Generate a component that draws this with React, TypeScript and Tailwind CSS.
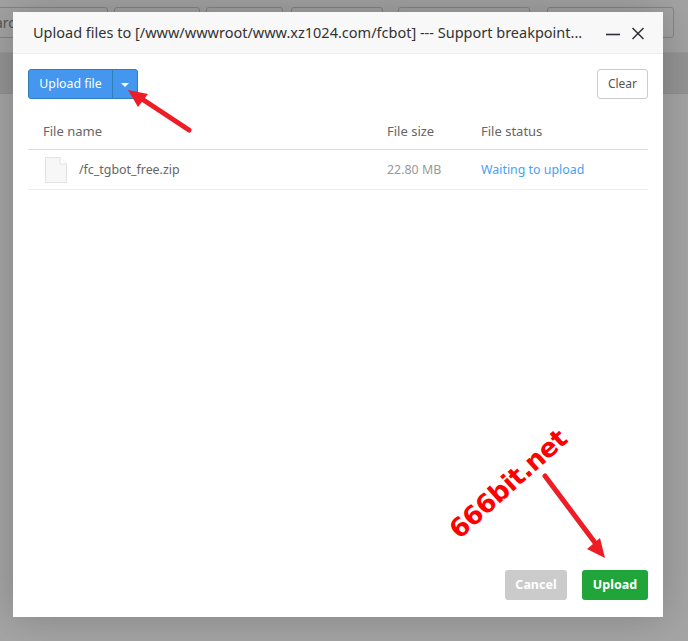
export default function App() {
  const bgBtn = "h-[31px] shrink-0 rounded-[3px] border border-[#858585]";
  return (
    <div className="relative h-[641px] w-[688px] overflow-hidden bg-[#a5a5a5] font-['Noto_Sans','Open_Sans',sans-serif]">
      {/* dimmed page behind */}
      <div className="flex h-[53px] items-start gap-[6px] border-b border-[#999] bg-[#a3a3a3] pt-[7px]">
        <div className={`${bgBtn} ml-[-10px] flex w-[118px] items-center justify-end pr-[92px] text-[14px] whitespace-nowrap text-[#555]`}>arc</div>
        <div className={`${bgBtn} w-[86px]`} />
        <div className={`${bgBtn} w-[77px]`} />
        <div className={`${bgBtn} ml-[2px] w-[92px]`} />
        <div className={`${bgBtn} ml-[9px] w-[132px]`} />
        <div className={`${bgBtn} ml-[11px] w-[127px]`} />
      </div>
      <div className="h-[41px] border-b border-[#8f8f8f] bg-[#949494]" />

      {/* modal */}
      <div className="absolute left-[13px] top-[12px] flex h-[605px] w-[650px] flex-col bg-white shadow-[0_0_40px_rgba(0,0,0,0.22)]">
        <div className="flex h-[42px] shrink-0 items-center border-b border-[#eeeeee] bg-[#f8f8f8] pl-[20px] pr-[19px]">
          <span className="w-[560px] whitespace-nowrap text-[14.5px] leading-none text-[#333]">
            Upload files to [/www/wwwroot/www.xz1024.com/fcbot] --- Support breakpoint...
          </span>
          <svg className="ml-auto" width="38" height="14" viewBox="0 0 38 14" fill="none" stroke="#2e2d3c">
            <path d="M0 8.5H14" strokeWidth="1.6" />
            <path d="M26.5 2L37.5 13M37.5 2L26.5 13" strokeWidth="1.5" />
          </svg>
        </div>

        <div className="flex flex-1 flex-col px-[15px] pt-[15px]">
          <div className="flex items-start justify-between">
            <div className="flex h-[30px] overflow-hidden rounded-[3px] border border-[#2e7fb8] bg-[#4496ee] text-white">
              <div className="flex w-[83px] items-center justify-center text-[12.3px]">Upload file</div>
              <div className="flex w-[25px] items-center justify-center border-l border-[#2e7fb8]">
                <div className="mt-[2px] h-0 w-0 border-x-[4px] border-t-[4px] border-x-transparent border-t-white" />
              </div>
            </div>
            <div className="flex h-[30px] w-[51px] items-center justify-center rounded-[3px] border border-[#cccccc] bg-white text-[12px] text-[#555]">
              Clear
            </div>
          </div>

          <div className="mt-[15px] flex h-[36px] items-center border-b border-[#dddddd] text-[13px] text-[#666]">
            <div className="w-[359px] pl-[15px]">File name</div>
            <div className="w-[94px]">File size</div>
            <div>File status</div>
          </div>
          <div className="flex h-[40px] items-center border-b border-[#eeeeee] text-[12.4px]">
            <div className="flex w-[359px] items-center pl-[17px] text-[#666]">
              <svg width="22" height="26" viewBox="0 0 22 26" className="mr-[12px]">
                <path d="M.5.5H15L21.5 7V25.5H.5Z" fill="#f7f7f7" stroke="#e2e2e2" />
                <path d="M15 .5V7H21.5" fill="#fff" stroke="#e2e2e2" />
              </svg>
              <span className="mt-[2px]">/fc_tgbot_free.zip</span>
            </div>
            <div className="mt-[2px] w-[94px] text-[#999]">22.80 MB</div>
            <div className="mt-[2px] text-[#4a9ff5]">Waiting to upload</div>
          </div>

          <div className="mt-auto mb-[17px] flex justify-end gap-[15px]">
            <div className="flex h-[30px] w-[62px] items-center justify-center rounded-[3px] bg-[#cbcbcb] text-[12.5px] font-bold text-white">Cancel</div>
            <div className="flex h-[30px] w-[66px] items-center justify-center rounded-[3px] bg-[#20a53a] text-[12.5px] font-bold text-white">Upload</div>
          </div>
        </div>
      </div>

      {/* annotations */}
      <div className="absolute left-[428px] top-[471px] w-[160px] -rotate-[42deg] whitespace-nowrap text-center font-['DejaVu_Sans',sans-serif] text-[26px] font-bold leading-none tracking-[-0.5px] text-[#ff0000]">
        666bit.net
      </div>
      <svg className="pointer-events-none absolute left-0 top-0" width="688" height="641" viewBox="0 0 688 641" fill="none">
        <path d="M189 130L142 99" stroke="#ee1c25" strokeWidth="5" strokeLinecap="round" />
        <path d="M128 90L148 94L138 107Z" fill="#ee1c25" />
        <path d="M545 476L596 544" stroke="#ee1c25" strokeWidth="5" strokeLinecap="round" />
        <path d="M605 558L587 549L600 538Z" fill="#ee1c25" />
      </svg>
    </div>
  );
}
